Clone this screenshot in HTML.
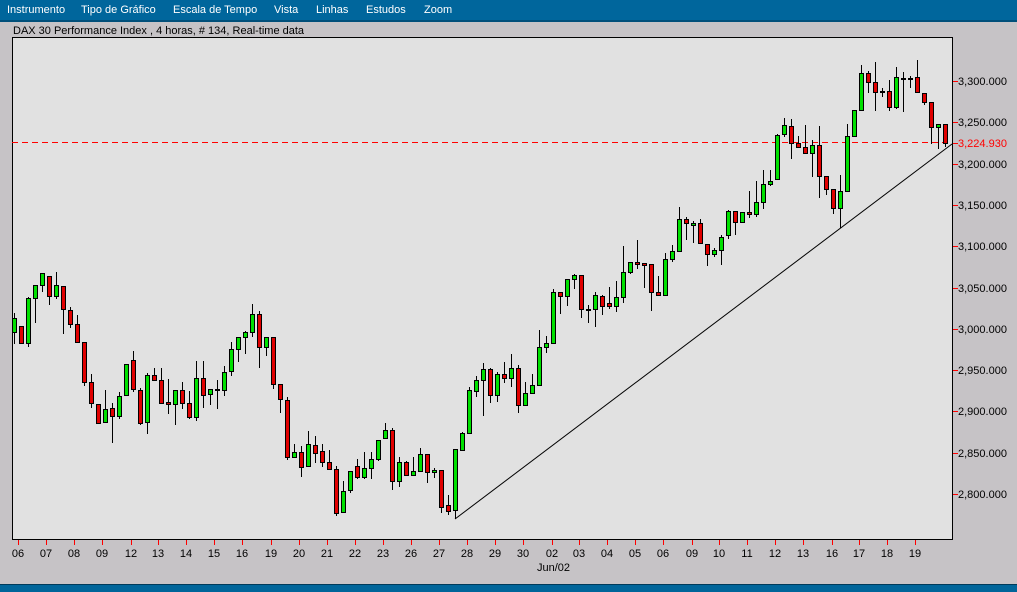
<!DOCTYPE html>
<html><head><meta charset="utf-8"><style>
body{margin:0;width:1017px;height:591px;overflow:hidden;background:#c6c3c6;font-family:"Liberation Sans",sans-serif;position:relative}
#menu{position:absolute;left:0;top:0;width:1017px;height:22px;background:#00669c;border-bottom:2px solid #004f7a;box-sizing:border-box}
#menu span{position:absolute;top:4px;color:#fff;font-size:11px}
#title{position:absolute;left:13px;top:25px;font-size:11px;color:#000}
#status{position:absolute;left:0;top:584px;width:1017px;height:7px;background:#00659a;border-top:1px solid #003a5a}
</style></head><body>
<div id="menu">
<span style="left:7px">Instrumento</span><span style="left:81px">Tipo de Gráfico</span><span style="left:173px">Escala de Tempo</span><span style="left:274px">Vista</span><span style="left:316px">Linhas</span><span style="left:366px">Estudos</span><span style="left:424px">Zoom</span>
</div>
<div id="title">DAX 30 Performance Index , 4 horas, # 134, Real-time data</div>
<svg id="s" width="1017" height="591" style="position:absolute;left:0;top:0" xmlns="http://www.w3.org/2000/svg" font-family="Liberation Sans, sans-serif" font-size="11">
<rect x="12.5" y="37.5" width="940" height="502" fill="#e1e1e1" stroke="#000" stroke-width="1"/>
<line x1="12" y1="142.5" x2="952" y2="142.5" stroke="#ff0000" stroke-dasharray="6,4"/>
<line x1="455" y1="519" x2="952" y2="144" stroke="#000" stroke-width="1"/>
<g id="c"></g>
<g id="ax"></g>
<text x="537" y="571" fill="#000">Jun/02</text>
</svg>
<div id="status"></div>
<script>
var D=[[318,332,313,344,'g'],[326,343,326,344,'r'],[298,343,297,347,'g'],[285,298,285,323,'g'],[273,285,273,292,'g'],[276,296,276,305,'r'],[285,296,272,299,'g'],[286,309,286,334,'r'],[310,324,307,328,'r'],[324,342,315,342,'r'],
[342,382,342,386,'r'],[382,403,374,408,'r'],[404,423,404,424,'r'],[409,422,390,422,'g'],[408,416,403,443,'r'],[396,416,392,419,'g'],[364,395,364,395,'g'],[360,389,351,392,'r'],[390,423,388,425,'r'],[375,422,373,434,'g'],
[375,380,368,381,'r'],[380,403,368,403,'r'],[402,404,379,414,'r'],[390,404,390,425,'g'],[390,403,382,409,'r'],[403,417,391,419,'r'],[378,417,361,421,'g'],[378,395,361,408,'r'],[389,394,389,405,'g'],[389,390,380,409,'g'],
[372,390,366,396,'g'],[349,371,342,376,'g'],[337,349,337,362,'g'],[332,337,331,354,'g'],[314,332,304,337,'g'],[314,347,311,368,'r'],[337,347,337,356,'g'],[337,384,337,389,'r'],[384,399,384,413,'r'],[400,457,397,460,'r'],
[452,457,444,457,'g'],[452,467,446,477,'r'],[444,466,431,466,'g'],[445,453,436,463,'r'],[451,462,444,467,'r'],[462,469,450,469,'r'],[469,513,466,516,'r'],[491,512,481,512,'g'],[471,490,471,493,'g'],[466,477,459,479,'r'],
[468,477,452,479,'g'],[459,468,452,479,'g'],[440,459,440,461,'g'],[430,438,423,438,'g'],[430,481,428,490,'r'],[462,481,457,487,'g'],[462,475,461,476,'r'],[471,475,457,475,'g'],[454,471,448,471,'g'],[454,472,454,483,'r'],
[470,472,468,478,'g'],[470,507,470,513,'r'],[505,511,495,515,'r'],[449,510,449,519,'g'],[433,450,432,450,'g'],[390,433,387,433,'g'],[380,391,376,397,'g'],[369,380,363,416,'g'],[369,395,368,403,'r'],[374,395,372,402,'g'],
[374,378,362,383,'r'],[368,378,354,387,'g'],[368,405,365,413,'r'],[393,405,382,405,'g'],[385,393,374,393,'g'],[347,385,330,385,'g'],[343,347,336,353,'g'],[292,343,289,343,'g'],[292,296,292,314,'r'],[279,296,279,306,'g'],
[275,279,274,289,'g'],[275,309,275,318,'r'],[309,310,305,323,'g'],[295,309,292,327,'g'],[296,306,295,315,'r'],[303,306,287,309,'r'],[297,306,281,312,'g'],[272,297,246,303,'g'],[262,272,262,274,'g'],[262,264,240,269,'r'],
[263,265,263,288,'r'],[264,292,264,311,'r'],[292,295,276,295,'r'],[259,295,253,295,'g'],[251,259,245,262,'g'],[219,251,207,251,'g'],[219,223,217,240,'r'],[223,225,221,243,'g'],[223,243,219,244,'r'],[244,254,244,266,'r'],
[250,254,248,257,'g'],[237,250,235,265,'g'],[211,235,210,239,'g'],[211,222,211,235,'r'],[212,222,212,222,'g'],[212,214,191,218,'r'],[202,214,181,217,'g'],[184,202,170,209,'g'],[181,184,170,186,'g'],[135,179,134,179,'g'],
[125,134,118,137,'g'],[126,143,119,159,'r'],[143,147,136,147,'r'],[147,153,125,154,'r'],[145,153,140,177,'g'],[145,176,126,198,'r'],[176,189,176,195,'r'],[189,208,189,214,'r'],[191,208,175,228,'g'],[136,191,124,191,'g'],
[110,136,110,136,'g'],[73,110,65,110,'g'],[73,82,71,93,'r'],[82,92,62,111,'r'],[91,92,88,97,'g'],[91,107,80,111,'r'],[77,107,67,109,'g'],[78,79,72,112,'g'],[78,79,76,88,'g'],[77,92,60,92,'r'],
[93,102,93,105,'r'],[102,127,102,144,'r'],[124,127,124,149,'g'],[124,143,124,147,'r']];
var h='';
for(var i=0;i<D.length;i++){var d=D[i],x=14+7*i;
h+='<line x1="'+(x+0.5)+'" y1="'+d[2]+'" x2="'+(x+0.5)+'" y2="'+d[3]+'" stroke="#000"/>';
var ht=Math.max(d[1]-d[0],1);
h+='<rect x="'+(x-1.5)+'" y="'+(d[0]+0.5)+'" width="4" height="'+ht+'" fill="'+(d[4]=='g'?'#00e000':'#e00000')+'" stroke="#000"/>';}
document.getElementById('c').innerHTML=h;
var a='';
var P=[['3,300.000',81],['3,250.000',122],['3,200.000',164],['3,150.000',205],['3,100.000',246],['3,050.000',288],['3,000.000',329],['2,950.000',370],['2,900.000',411],['2,850.000',453],['2,800.000',494]];
P.forEach(function(p){a+='<line x1="953" y1="'+(p[1]+0.5)+'" x2="958" y2="'+(p[1]+0.5)+'" stroke="#f00"/><text x="958" y="'+(p[1]+4)+'" fill="#000">'+p[0]+'</text>';});
a+='<line x1="953" y1="143.5" x2="958" y2="143.5" stroke="#f00"/><text x="958" y="147" fill="#f00">3,224.930</text>';
var X=[['06',18],['07',46],['08',74],['09',102],['12',131],['13',158],['14',186],['15',214],['16',242],['19',271],['20',299],['21',327],['22',355],['23',383],['26',411],['27',439],['28',467],['29',495],['30',523],['02',552],['03',579],['04',607],['05',635],['06',663],['09',692],['10',719],['11',747],['12',775],['13',803],['16',832],['17',859],['18',887],['19',915]];
X.forEach(function(p){a+='<line x1="'+(p[1]+0.5)+'" y1="540" x2="'+(p[1]+0.5)+'" y2="545" stroke="#f00"/><text x="'+p[1]+'" y="557" text-anchor="middle" fill="#000">'+p[0]+'</text>';});
document.getElementById('ax').innerHTML=a;
</script>
</body></html>
